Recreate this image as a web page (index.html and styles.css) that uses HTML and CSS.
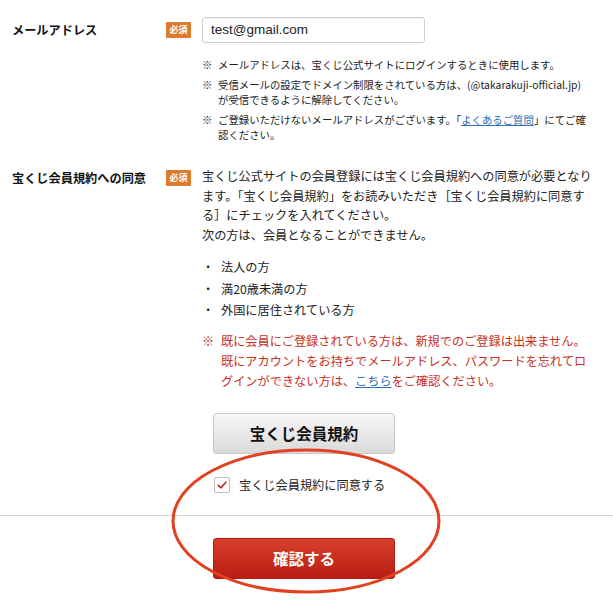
FILE: index.html
```html
<!DOCTYPE html>
<html lang="ja">
<head>
<meta charset="utf-8">
<title>会員登録</title>
<link rel="stylesheet" href="styles.css">
</head>
<body>
<div class="page">
  <div class="row row-email">
    <div class="label">メールアドレス</div>
    <div class="badge">必須</div>
    <div class="field">
      <div class="input">test@gmail.com</div>
      <ul class="notes">
        <li><span class="mark">※</span><span>メールアドレスは、宝くじ公式サイトにログインするときに使用します。</span></li>
        <li><span class="mark">※</span><span>受信メールの設定でドメイン制限をされている方は、(@takarakuji-official.jp)<br>が受信できるように解除してください。</span></li>
        <li><span class="mark">※</span><span>ご登録いただけないメールアドレスがございます。「<a class="link" href="#">よくあるご質問</a>」にてご確認ください。</span></li>
      </ul>
    </div>
  </div>

  <div class="row row-terms">
    <div class="label">宝くじ会員規約への同意</div>
    <div class="badge">必須</div>
    <div class="field">
      <p class="para">宝くじ公式サイトの会員登録には宝くじ会員規約への同意が必要となります。「宝くじ会員規約」をお読みいただき［宝くじ会員規約に同意す<br>る］にチェックを入れてください。<br>次の方は、会員となることができません。</p>
      <ul class="bullets">
        <li><span class="dot">・</span><span>法人の方</span></li>
        <li><span class="dot">・</span><span>満20歳未満の方</span></li>
        <li><span class="dot">・</span><span>外国に居住されている方</span></li>
      </ul>
      <div class="warn"><span class="mark">※</span><span>既に会員にご登録されている方は、新規でのご登録は出来ません。既にアカウントをお持ちでメールアドレス、パスワードを忘れてログインができない方は、<a class="link" href="#">こちら</a>をご確認ください。</span></div>
    </div>
  </div>

  <div class="actions">
    <div class="actions-inner">
      <button class="btn btn-gray" type="button">宝くじ会員規約</button>
      <label class="agree">
        <span class="check">
          <svg width="12" height="12" viewBox="0 0 12 12"><path d="M2.2 6.2 L5 8.8 L9.8 3.2" fill="none" stroke="#c4241a" stroke-width="1.6" stroke-linecap="round" stroke-linejoin="round"/></svg>
        </span>
        <span>宝くじ会員規約に同意する</span>
      </label>
    </div>
  </div>

  <div class="divider"></div>

  <div class="actions submit">
    <div class="actions-inner">
      <button class="btn btn-red" type="button">確認する</button>
    </div>
  </div>

  <svg class="annotation" width="613" height="600" viewBox="0 0 613 600">
    <ellipse cx="306" cy="521" rx="133" ry="71" fill="none" stroke="#e2401f" stroke-width="3"/>
  </svg>
</div>
</body>
</html>
```

FILE: styles.css
```css
* { box-sizing: border-box; }
html, body { margin: 0; padding: 0; background: #fff; }
body {
  font-family: "Noto Sans CJK JP", "Noto Sans", sans-serif;
  color: #222;
  font-size: 12.2px;
}
.page {
  position: relative;
  width: 613px;
  height: 600px;
  overflow: hidden;
}
.row {
  display: flex;
  align-items: flex-start;
  padding-left: 12px;
  padding-right: 18px;
}
.row-email { padding-top: 17px; }
.row-terms { padding-top: 24px; }
.label {
  width: 154px;
  font-weight: bold;
  font-size: 12.2px;
  color: #111;
  line-height: 20px;
}
.row-email .label { margin-top: 3px; }
.row-terms .label { margin-top: 2px; }
.badge {
  width: 25px;
  height: 16px;
  background: #de7a2c;
  color: #fff;
  font-size: 9px;
  font-weight: bold;
  line-height: 16px;
  text-align: center;
  border-radius: 1px;
  margin-right: 11px;
}
.row-email .badge { margin-top: 5px; }
.row-terms .badge { margin-top: 4px; }
.field { flex: 1; min-width: 0; }
.input {
  width: 223px;
  height: 26px;
  border: 1px solid #cfcfcf;
  border-radius: 3px;
  box-shadow: inset 0 1px 1px rgba(0,0,0,0.06);
  font-family: "Liberation Sans", "Noto Sans CJK JP", sans-serif;
  font-size: 13.5px;
  line-height: 24px;
  padding-left: 8px;
  color: #222;
}
.notes {
  list-style: none;
  margin: 14px 0 0;
  padding: 0;
  font-size: 10.4px;
  line-height: 15px;
}
.notes li { display: flex; margin-bottom: 5px; }
.notes li:last-child { margin-bottom: 0; }
.mark { flex: none; width: 16px; }
.link { color: #2f6fb5; text-decoration: underline; }
.para {
  margin: 0;
  padding-top: 1px;
  line-height: 19.7px;
}
.bullets {
  list-style: none;
  margin: 11px 0 0;
  padding: 0;
  line-height: 21.7px;
}
.bullets li { display: flex; }
.dot { width: 19px; flex: none; }
.warn {
  display: flex;
  margin-top: 9px;
  color: #c8301f;
  line-height: 20px;
}
.warn .mark { width: 19px; }
.actions {
  display: flex;
  justify-content: center;
  padding-right: 5px;
  margin-top: 22px;
}
.actions-inner { width: 182px; }
.btn {
  display: block;
  width: 182px;
  height: 41px;
  border-radius: 3px;
  font-family: "Noto Sans CJK JP", sans-serif;
  font-weight: bold;
  font-size: 15.5px;
  cursor: pointer;
}
.btn-gray {
  background: linear-gradient(#f7f7f7, #dadada);
  border: 1px solid #c8c8c8;
  color: #111;
}
.btn-red {
  background: linear-gradient(#d8402c, #b81d12);
  border: 1px solid #b01a10;
  color: #fff;
}
.agree {
  display: flex;
  align-items: center;
  margin-top: 23px;
  margin-left: 1px;
  line-height: 16px;
  color: #222;
}
.check {
  width: 16px;
  height: 16px;
  border: 1px solid #bdbdbd;
  border-radius: 2px;
  background: #fff;
  display: flex;
  align-items: center;
  justify-content: center;
  margin-right: 9px;
}
.divider {
  height: 1px;
  background: #d4d4d4;
  margin-top: 22px;
}
.submit { margin-top: 22px; }
.annotation {
  position: absolute;
  left: 0;
  top: 0;
  pointer-events: none;
}
```
